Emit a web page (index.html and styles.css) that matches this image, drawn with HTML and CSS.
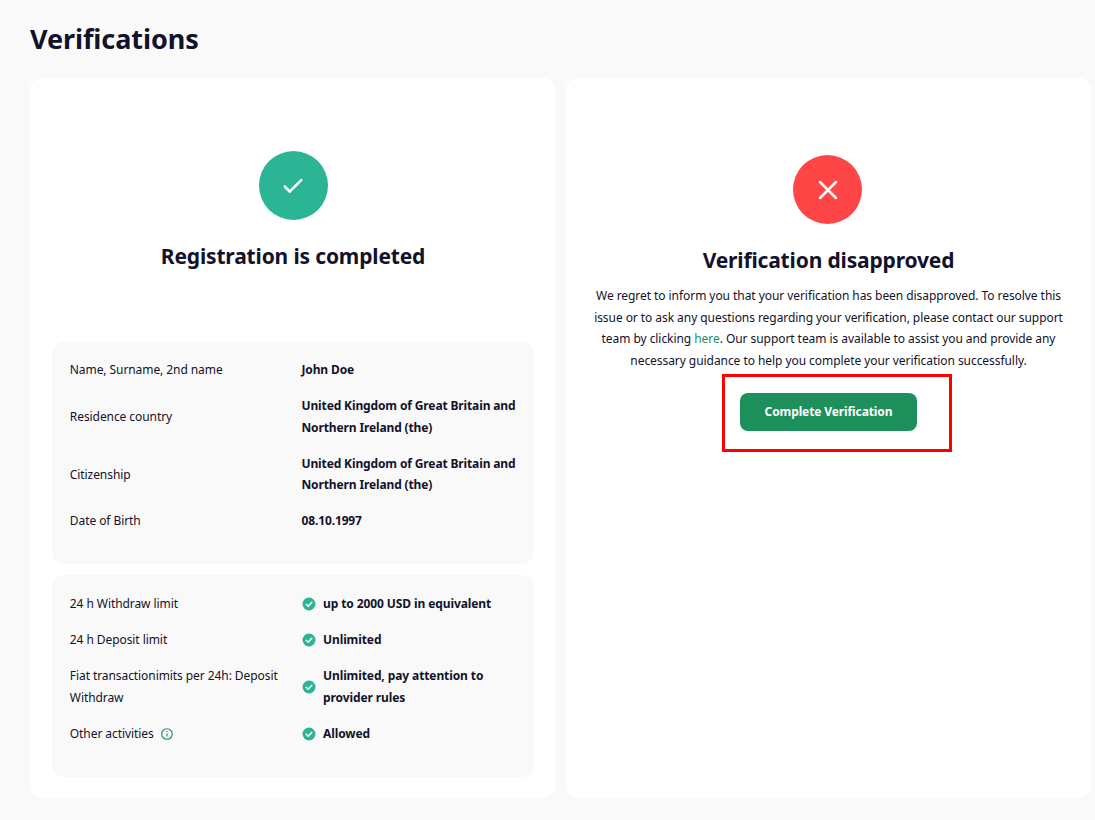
FILE: index.html
```html
<!DOCTYPE html>
<html lang="en">
<head>
<meta charset="utf-8">
<title>Verifications</title>
<link rel="stylesheet" href="styles.css">
</head>
<body>
<main class="page">
  <h1 class="title">Verifications</h1>
  <div class="cards">
    <section class="card card-left">
      <div class="status">
        <span class="circle circle-ok">
          <svg width="24" height="24" viewBox="0 0 24 24" fill="none"><path d="M3.8 12.5l4.9 5.2L20.2 6.2" stroke="#fff" stroke-width="2.6" stroke-linecap="round" stroke-linejoin="round"/></svg>
        </span>
        <h2 class="heading">Registration is completed</h2>
      </div>
      <div class="panel panel-info">
        <div class="row"><span class="label">Name, Surname, 2nd name</span><strong class="value">John Doe</strong></div>
        <div class="row"><span class="label">Residence country</span><strong class="value">United Kingdom of Great Britain and Northern Ireland (the)</strong></div>
        <div class="row"><span class="label">Citizenship</span><strong class="value">United Kingdom of Great Britain and Northern Ireland (the)</strong></div>
        <div class="row"><span class="label">Date of Birth</span><strong class="value">08.10.1997</strong></div>
      </div>
      <div class="panel panel-limits">
        <div class="row"><span class="label">24 h Withdraw limit</span><span class="value check"><svg class="tick" viewBox="0 0 14 14"><circle cx="7" cy="7" r="6.5" fill="#2bb594"/><path d="M4.2 7.2l2 2 3.6-4" fill="none" stroke="#fff" stroke-width="1.5" stroke-linecap="round" stroke-linejoin="round"/></svg><strong>up to 2000 USD in equivalent</strong></span></div>
        <div class="row"><span class="label">24 h Deposit limit</span><span class="value check"><svg class="tick" viewBox="0 0 14 14"><circle cx="7" cy="7" r="6.5" fill="#2bb594"/><path d="M4.2 7.2l2 2 3.6-4" fill="none" stroke="#fff" stroke-width="1.5" stroke-linecap="round" stroke-linejoin="round"/></svg><strong>Unlimited</strong></span></div>
        <div class="row"><span class="label">Fiat transactionimits per 24h: Deposit Withdraw</span><span class="value check"><svg class="tick" viewBox="0 0 14 14"><circle cx="7" cy="7" r="6.5" fill="#2bb594"/><path d="M4.2 7.2l2 2 3.6-4" fill="none" stroke="#fff" stroke-width="1.5" stroke-linecap="round" stroke-linejoin="round"/></svg><strong>Unlimited, pay attention to provider rules</strong></span></div>
        <div class="row"><span class="label">Other activities<svg class="info" viewBox="0 0 12 12"><circle cx="6" cy="6" r="5.3" fill="none" stroke="#1d8f5a" stroke-width="1.1"/><path d="M6 5.4v3.2M6 3v1" stroke="#1d8f5a" stroke-width="1.1" fill="none"/></svg></span><span class="value check"><svg class="tick" viewBox="0 0 14 14"><circle cx="7" cy="7" r="6.5" fill="#2bb594"/><path d="M4.2 7.2l2 2 3.6-4" fill="none" stroke="#fff" stroke-width="1.5" stroke-linecap="round" stroke-linejoin="round"/></svg><strong>Allowed</strong></span></div>
      </div>
    </section>
    <section class="card card-right">
      <span class="circle circle-bad">
        <svg width="24" height="24" viewBox="0 0 24 24" fill="none"><path d="M4 4l16 16M20 4L4 20" stroke="#fff" stroke-width="2.5" stroke-linecap="round"/></svg>
      </span>
      <h2 class="heading">Verification disapproved</h2>
      <p class="message">We regret to inform you that your verification has been disapproved. To resolve this issue or to ask any questions regarding your verification, please contact our support team by clicking <a class="link" href="#">here</a>. Our support team is available to assist you and provide any necessary guidance to help you complete your verification successfully.</p>
      <div class="action">
        <button class="button" type="button">Complete Verification</button>
        <div class="highlight"></div>
      </div>
    </section>
  </div>
</main>
</body>
</html>
```
FILE: styles.css
```css
* { box-sizing: border-box; }
html, body { margin: 0; padding: 0; }
body {
  background: #f9f9f9;
  color: #12122b;
  font-family: "Noto Sans", sans-serif;
  font-size: 12px;
  letter-spacing: -0.075px;
  height: 820px;
  overflow: hidden;
}
.page { padding: 0 4px 0 30px; }
.title {
  margin: 0;
  padding-top: 20px;
  height: 78px;
  font-size: 27px;
  line-height: 38px;
  font-weight: 700;
  letter-spacing: -0.08px;
}
.cards {
  display: grid;
  grid-template-columns: 525px 525px;
  gap: 11px;
}
.card {
  background: #fff;
  border-radius: 12px;
  height: 720px;
}
.card-left { padding: 73px 21px 21px 22px; }
.status { height: 191px; display: flex; flex-direction: column; align-items: center; }
.circle {
  width: 69px;
  height: 69px;
  border-radius: 50%;
  display: flex;
  align-items: center;
  justify-content: center;
  flex: none;
}
.circle-ok { background: #2bb594; }
.circle-bad { background: #ff4646; margin-right: 2px; }
.heading {
  margin: 21px 0 0;
  font-size: 21px;
  line-height: 30px;
  font-weight: 700;
  letter-spacing: -0.16px;
  text-align: center;
}
.panel {
  background: #f9f9f9;
  border-radius: 12px;
  padding: 17.2px 15px 17.2px 17.8px;
  display: flex;
  flex-direction: column;
  gap: 14.4px;
}
.panel-info { height: 222px; margin-bottom: 11px; }
.panel-limits { height: 202px; padding-top: 18.4px; }
.row {
  display: grid;
  grid-template-columns: 231.7px 1fr;
  align-items: center;
  line-height: 21.6px;
}
.label { display: block; padding-right: 10px; }
.value { font-weight: 700; letter-spacing: -0.13px; }
.check { display: flex; align-items: center; gap: 7px; padding-right: 20px; letter-spacing: -0.1px; }
.check strong { font-weight: 700; }
.tick { width: 14px; height: 14px; flex: none; margin-left: 0.5px; }
.info { width: 12px; height: 12px; margin-left: 7.5px; vertical-align: -2px; }
.card-right {
  padding: 77px 21px 0;
  display: flex;
  flex-direction: column;
  align-items: center;
}
.message {
  margin: 10px 0 0;
  text-align: center;
  line-height: 21.6px;
  width: 480px;
  letter-spacing: -0.06px;
}
.link { color: #1d8f5a; text-decoration: none; }
.action { position: relative; margin-top: 22px; }
.highlight {
  position: absolute;
  left: -18px;
  top: -19px;
  width: 230px;
  height: 78px;
  border: 3px solid #f00;
  pointer-events: none;
}
.button {
  display: block;
  width: 177px;
  height: 38px;
  padding: 0 0 2px;
  border: 0;
  border-radius: 8px;
  background: #1d8f5a;
  color: #fff;
  font: 700 12px "Noto Sans", sans-serif;
  letter-spacing: -0.11px;
}
```
